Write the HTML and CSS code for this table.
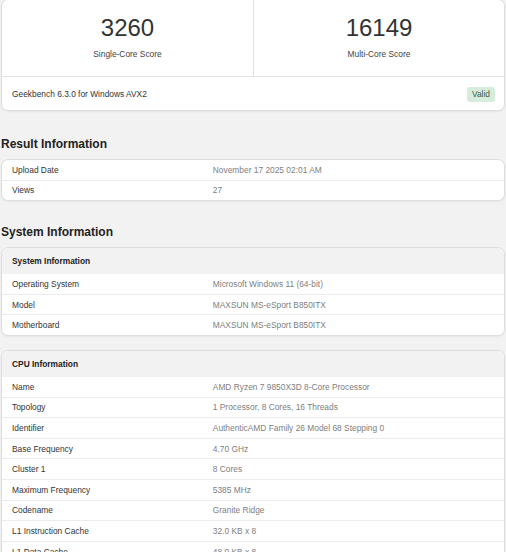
FILE: index.html
```html
<!DOCTYPE html>
<html>
<head>
<meta charset="utf-8">
<link rel="stylesheet" href="styles.css">
</head>
<body>
<div class="page">
  <div class="card score-card">
    <div class="scores">
      <div class="score">
        <div class="score-num">3260</div>
        <div class="score-label">Single-Core Score</div>
      </div>
      <div class="score">
        <div class="score-num">16149</div>
        <div class="score-label">Multi-Core Score</div>
      </div>
    </div>
    <div class="score-foot">
      <span>Geekbench 6.3.0 for Windows AVX2</span>
      <span class="badge">Valid</span>
    </div>
  </div>

  <h2 class="section-title first">Result Information</h2>
  <div class="card table">
    <div class="row"><div class="k">Upload Date</div><div class="v">November 17 2025 02:01 AM</div></div>
    <div class="row"><div class="k">Views</div><div class="v">27</div></div>
  </div>

  <h2 class="section-title">System Information</h2>
  <div class="card table">
    <div class="row head"><div class="k">System Information</div></div>
    <div class="row"><div class="k">Operating System</div><div class="v">Microsoft Windows 11 (64-bit)</div></div>
    <div class="row"><div class="k">Model</div><div class="v">MAXSUN MS-eSport B850ITX</div></div>
    <div class="row"><div class="k">Motherboard</div><div class="v">MAXSUN MS-eSport B850ITX</div></div>
  </div>

  <div class="card table cpu">
    <div class="row head"><div class="k">CPU Information</div></div>
    <div class="row"><div class="k">Name</div><div class="v">AMD Ryzen 7 9850X3D 8-Core Processor</div></div>
    <div class="row"><div class="k">Topology</div><div class="v">1 Processor, 8 Cores, 16 Threads</div></div>
    <div class="row"><div class="k">Identifier</div><div class="v">AuthenticAMD Family 26 Model 68 Stepping 0</div></div>
    <div class="row"><div class="k">Base Frequency</div><div class="v">4.70 GHz</div></div>
    <div class="row"><div class="k">Cluster 1</div><div class="v">8 Cores</div></div>
    <div class="row"><div class="k">Maximum Frequency</div><div class="v">5385 MHz</div></div>
    <div class="row"><div class="k">Codename</div><div class="v">Granite Ridge</div></div>
    <div class="row"><div class="k">L1 Instruction Cache</div><div class="v">32.0 KB x 8</div></div>
    <div class="row"><div class="k">L1 Data Cache</div><div class="v">48.0 KB x 8</div></div>
  </div>
</div>
</body>
</html>
```
FILE: styles.css
```css
html, body {
  margin: 0;
  padding: 0;
  background: #f2f2f2;
  overflow: hidden;
}
body {
  font-family: "Liberation Sans", Arial, sans-serif;
  font-size: 8.4px;
  color: #333;
}
.page {
  padding: 0 1px;
  margin-top: -1px;
}
.card {
  background: #fff;
  border: 1px solid #dedede;
  border-radius: 7px;
  box-shadow: 0 1px 2px rgba(0,0,0,0.05);
  overflow: hidden;
}
.scores {
  display: grid;
  grid-template-columns: 1fr 1fr;
  border-bottom: 1px solid #e3e3e3;
}
.score {
  height: 76px;
  display: flex;
  flex-direction: column;
  align-items: center;
  padding-top: 13px;
  box-sizing: border-box;
}
.score + .score {
  border-left: 1px solid #e3e3e3;
}
.score-num {
  font-size: 24px;
  line-height: 30px;
  color: #333;
}
.score-label {
  margin-top: 6px;
  line-height: 10px;
  color: #444;
}
.score-foot {
  height: 33px;
  display: flex;
  align-items: center;
  justify-content: space-between;
  padding: 0 9px 0 10px;
}
.badge {
  background: #d6ecdc;
  color: #3b5d46;
  padding: 0 5px;
  height: 15px;
  line-height: 15px;
  border-radius: 3px;
  margin-top: 1px;
}
.section-title {
  font-size: 12px;
  font-weight: bold;
  color: #222;
  margin: 22px 0 6px;
  line-height: 18px;
}
.section-title.first {
  margin-top: 24px;
}
.table .row {
  display: grid;
  grid-template-columns: 40% 60%;
  height: 19.6px;
  align-items: center;
  border-bottom: 1px solid #ececec;
}
.table .row:last-child {
  border-bottom: none;
}
.k {
  padding-left: 10px;
}
.v {
  padding-left: 10px;
  color: #808080;
}
.row.head {
  height: 26px;
  background: #f2f2f2;
  font-weight: bold;
  color: #222;
  border-bottom: none;
}
.cpu {
  margin-top: 14px;
}
```
